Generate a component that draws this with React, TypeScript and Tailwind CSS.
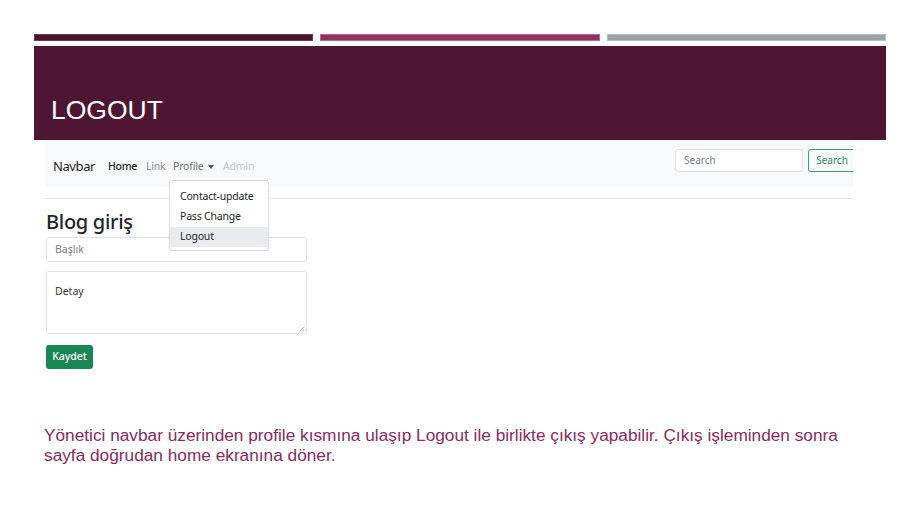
import React from "react";

export default function App() {
  const ui = { fontFamily: '"Noto Sans", "Open Sans", sans-serif' };
  const arial = { fontFamily: '"Liberation Sans", Arial, sans-serif' };
  return (
    <div className="w-[920px] h-[518px] bg-white overflow-hidden relative">
      <div className="pt-[34px] px-[34px]">
        {/* top bars */}
        <div className="flex gap-[7px] h-[7px]">
          <div className="flex-1 bg-[#4a1431] border border-[#6b3a55]" />
          <div className="flex-1 bg-[#8e3363] border border-[#b0668e]" />
          <div className="flex-1 bg-[#9aa1a7] border border-[#b9bec2]" />
        </div>
        {/* header */}
        <div className="mt-[5px] h-[94px] bg-[#4e1633] pl-[17px] pt-[49px]">
          <div className="text-white text-[26.5px] leading-[30px]" style={arial}>
            LOGOUT
          </div>
        </div>
        {/* screenshot */}
        <div className="ml-[11px] w-[808px] relative" style={ui}>
          <div className="mt-[2px] h-[45px] bg-[#f8f9fa] flex items-start pl-[8px] overflow-hidden">
            <div className="flex items-center h-[20px] mt-[15px]">
              <span className="w-[55px] text-[13px] text-[#1c1f23] tracking-[-0.4px]">Navbar</span>
              <span className="w-[38px] text-[10.5px] text-[#212529] font-medium tracking-[-0.3px]">Home</span>
              <span className="w-[27px] text-[10.5px] text-[#8c8f92] tracking-[-0.2px]">Link</span>
              <span className="w-[50px] text-[10.5px] text-[#6c6f72] tracking-[-0.2px] flex items-center">
                Profile
                <span className="ml-[5px] w-0 h-0 border-l-[3.5px] border-r-[3.5px] border-t-[4px] border-l-transparent border-r-transparent border-t-[#555]" />
              </span>
              <span className="text-[10.5px] text-[#c4c6c8] tracking-[-0.2px]">Admin</span>
            </div>
            <div className="ml-auto mt-[7px] flex items-center gap-[5px] mr-[-3px]">
              <div className="w-[128px] h-[23px] bg-white border border-[#dee2e6] rounded-[3px] flex items-center pl-[8px] text-[10px] text-[#7a7f84]">
                Search
              </div>
              <div className="w-[48px] h-[23px] border border-[#3f9a6e] rounded-[3px] flex items-center justify-center text-[10px] text-[#2b8a5c]">
                Search
              </div>
            </div>
          </div>
          <div className="mt-[11px] h-px bg-[#e3e4e5]" />
          <div className="mt-[11px] h-[24px] leading-[24px] text-[20px] font-medium text-[#212529] ml-[1px] tracking-[-0.3px]">
            Blog giriş
          </div>
          <div className="mt-[3px] ml-[1px] w-[261px] h-[25px] border border-[#dee2e6] rounded-[3px] flex items-center pl-[8px] text-[10.5px] text-[#7a7f84]">
            Başlık
          </div>
          <div className="mt-[9px] ml-[1px] w-[261px] h-[63px] border border-[#dee2e6] rounded-[3px] pl-[8px] pt-[12px] text-[10.5px] text-[#333] relative">
            Detay
            <svg className="absolute right-[1px] bottom-[1px]" width="6" height="6" viewBox="0 0 6 6">
              <line x1="0.5" y1="5.5" x2="5.5" y2="0.5" stroke="#999" strokeWidth="0.7" />
              <line x1="3" y1="5.5" x2="5.5" y2="3" stroke="#999" strokeWidth="0.7" />
            </svg>
          </div>
          <div className="mt-[11px] ml-[1px] w-[47px] h-[24px] bg-[#198754] rounded-[3px] flex items-center justify-center text-[10.5px] text-white font-medium">
            Kaydet
          </div>

          {/* dropdown */}
          <div className="absolute left-[124px] top-[38px] w-[100px] h-[71px] bg-white border border-[#dcdcdc] rounded-[3px] pt-[6px]">
            <div className="h-[20px] pl-[10px] flex items-center text-[10.5px] text-[#212529] tracking-[-0.2px]">Contact-update</div>
            <div className="h-[20px] pl-[10px] flex items-center text-[10.5px] text-[#212529] tracking-[-0.2px]">Pass Change</div>
            <div className="h-[20px] pl-[10px] flex items-center text-[10.5px] text-[#212529] bg-[#e9ecef] tracking-[-0.2px]">Logout</div>
          </div>
        </div>
        {/* caption */}
        <div className="mt-[56px] ml-[10px] text-[17.25px] leading-[20px] text-[#8b2a5d] w-[830px]" style={arial}>
          Yönetici navbar üzerinden profile kısmına ulaşıp Logout ile birlikte çıkış yapabilir. Çıkış işleminden sonra sayfa doğrudan home ekranına döner.
        </div>
      </div>
    </div>
  );
}
